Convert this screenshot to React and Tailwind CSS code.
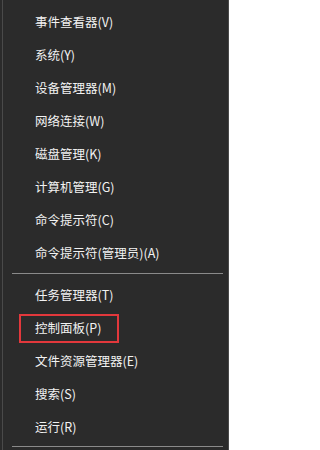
const groupA = [
  '事件查看器(V)',
  '系统(Y)',
  '设备管理器(M)',
  '网络连接(W)',
  '磁盘管理(K)',
  '计算机管理(G)',
  '命令提示符(C)',
  '命令提示符(管理员)(A)',
];

const groupB = ['任务管理器(T)', '控制面板(P)', '文件资源管理器(E)', '搜索(S)', '运行(R)'];

function Item({ label, marked }) {
  return (
    <div className="relative h-[33px] flex items-center pl-[32px] text-[12.5px] text-[#f2f2f2] leading-none">
      {label}
      {marked && (
        <span className="absolute left-[16px] top-[2px] w-[100px] h-[29px] border-[2.5px] border-[#e2383c]" />
      )}
    </div>
  );
}

export default function App() {
  return (
    <div
      className="w-[229px] h-[450px] bg-[#2b2b2b] pl-[2px] overflow-hidden"
      style={{ fontFamily: '"Noto Sans CJK SC", "Microsoft YaHei", sans-serif' }}
    >
      <div className="h-full border-l border-r border-[#4a4a4a] pt-[6px]">
        {groupA.map((l) => (
          <Item key={l} label={l} />
        ))}
        <div className="h-[9px] pt-[3px] pl-[9px] pr-[5px]">
          <div className="h-px bg-[#8a8a8a]" />
        </div>
        {groupB.map((l) => (
          <Item key={l} label={l} marked={l === '控制面板(P)'} />
        ))}
        <div className="pt-[2px] pl-[9px] pr-[5px]">
          <div className="h-px bg-[#8a8a8a]" />
        </div>
      </div>
    </div>
  );
}
